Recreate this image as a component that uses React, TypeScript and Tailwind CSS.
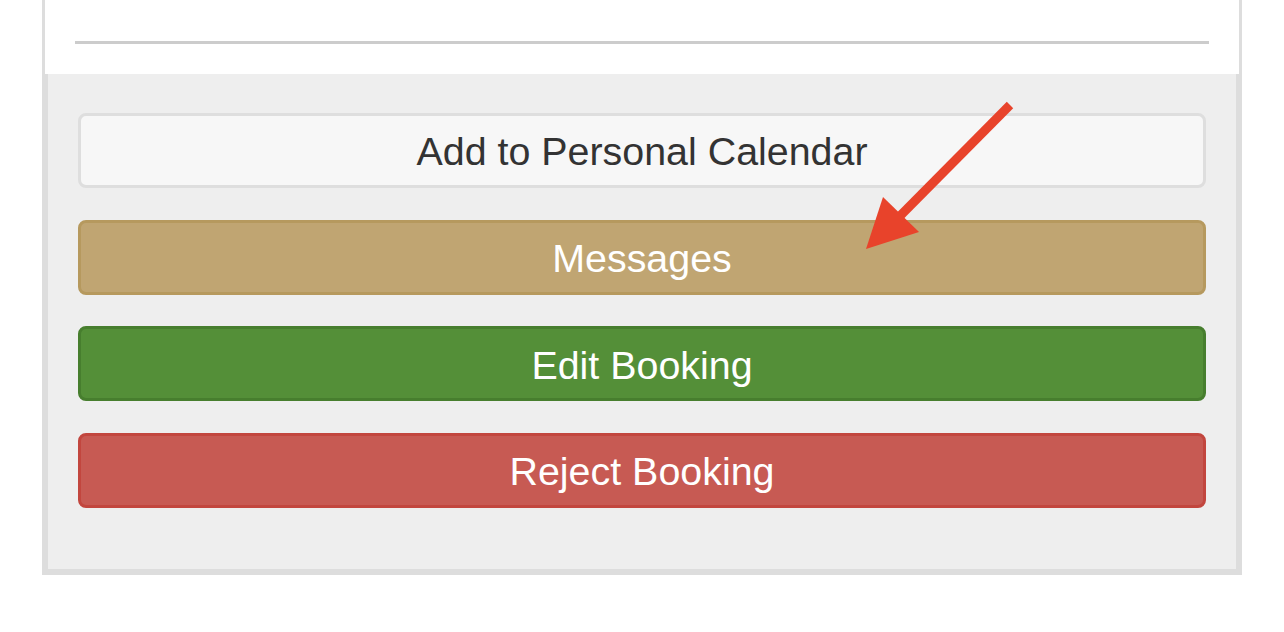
const buttons = [
    { label: "Add to Personal Calendar", cls: "bg-[#f7f7f7] border-[#dedede] text-[#333333]" },
    { label: "Messages", cls: "bg-[#c0a572] border-[#b6995e] text-white" },
    { label: "Edit Booking", cls: "bg-[#548f38] border-[#477e2e] text-white" },
    { label: "Reject Booking", cls: "bg-[#c75a53] border-[#c2463e] text-white" },
];

const App = () => {
    return (
        <div className="relative w-full h-[632px] bg-white overflow-hidden" style={{ fontFamily: '"Liberation Sans", Arial, sans-serif' }}>
            <div className="ml-[42px] w-[1200px]">
                <div className="h-[74px] border-x-[3px] border-[#dddddd] bg-white px-[30px] pt-[41px]">
                    <div className="h-[3px] bg-[#cccccc]"></div>
                </div>
                <div className="border-x-[6px] border-b-[6px] border-[#dddddd] bg-[#eeeeee] px-[30px] pt-[39px] pb-[61px] flex flex-col gap-[31.67px]">
                    {buttons.map((b) => (
                        <button
                            key={b.label}
                            className={`h-[75px] w-full rounded-[8px] border-[3px] flex items-center justify-center pt-[3px] text-[39.4px] leading-none ${b.cls}`}
                        >
                            {b.label}
                        </button>
                    ))}
                </div>
            </div>

            {/* annotation arrow */}
            <svg className="absolute left-0 top-0 pointer-events-none" width="1284" height="632">
                <line x1="1010" y1="105" x2="898" y2="218" stroke="#e8432b" strokeWidth="9" />
                <polygon points="866,249 883,197 919,232" fill="#e8432b" />
            </svg>
        </div>
    );
};

export default App;
